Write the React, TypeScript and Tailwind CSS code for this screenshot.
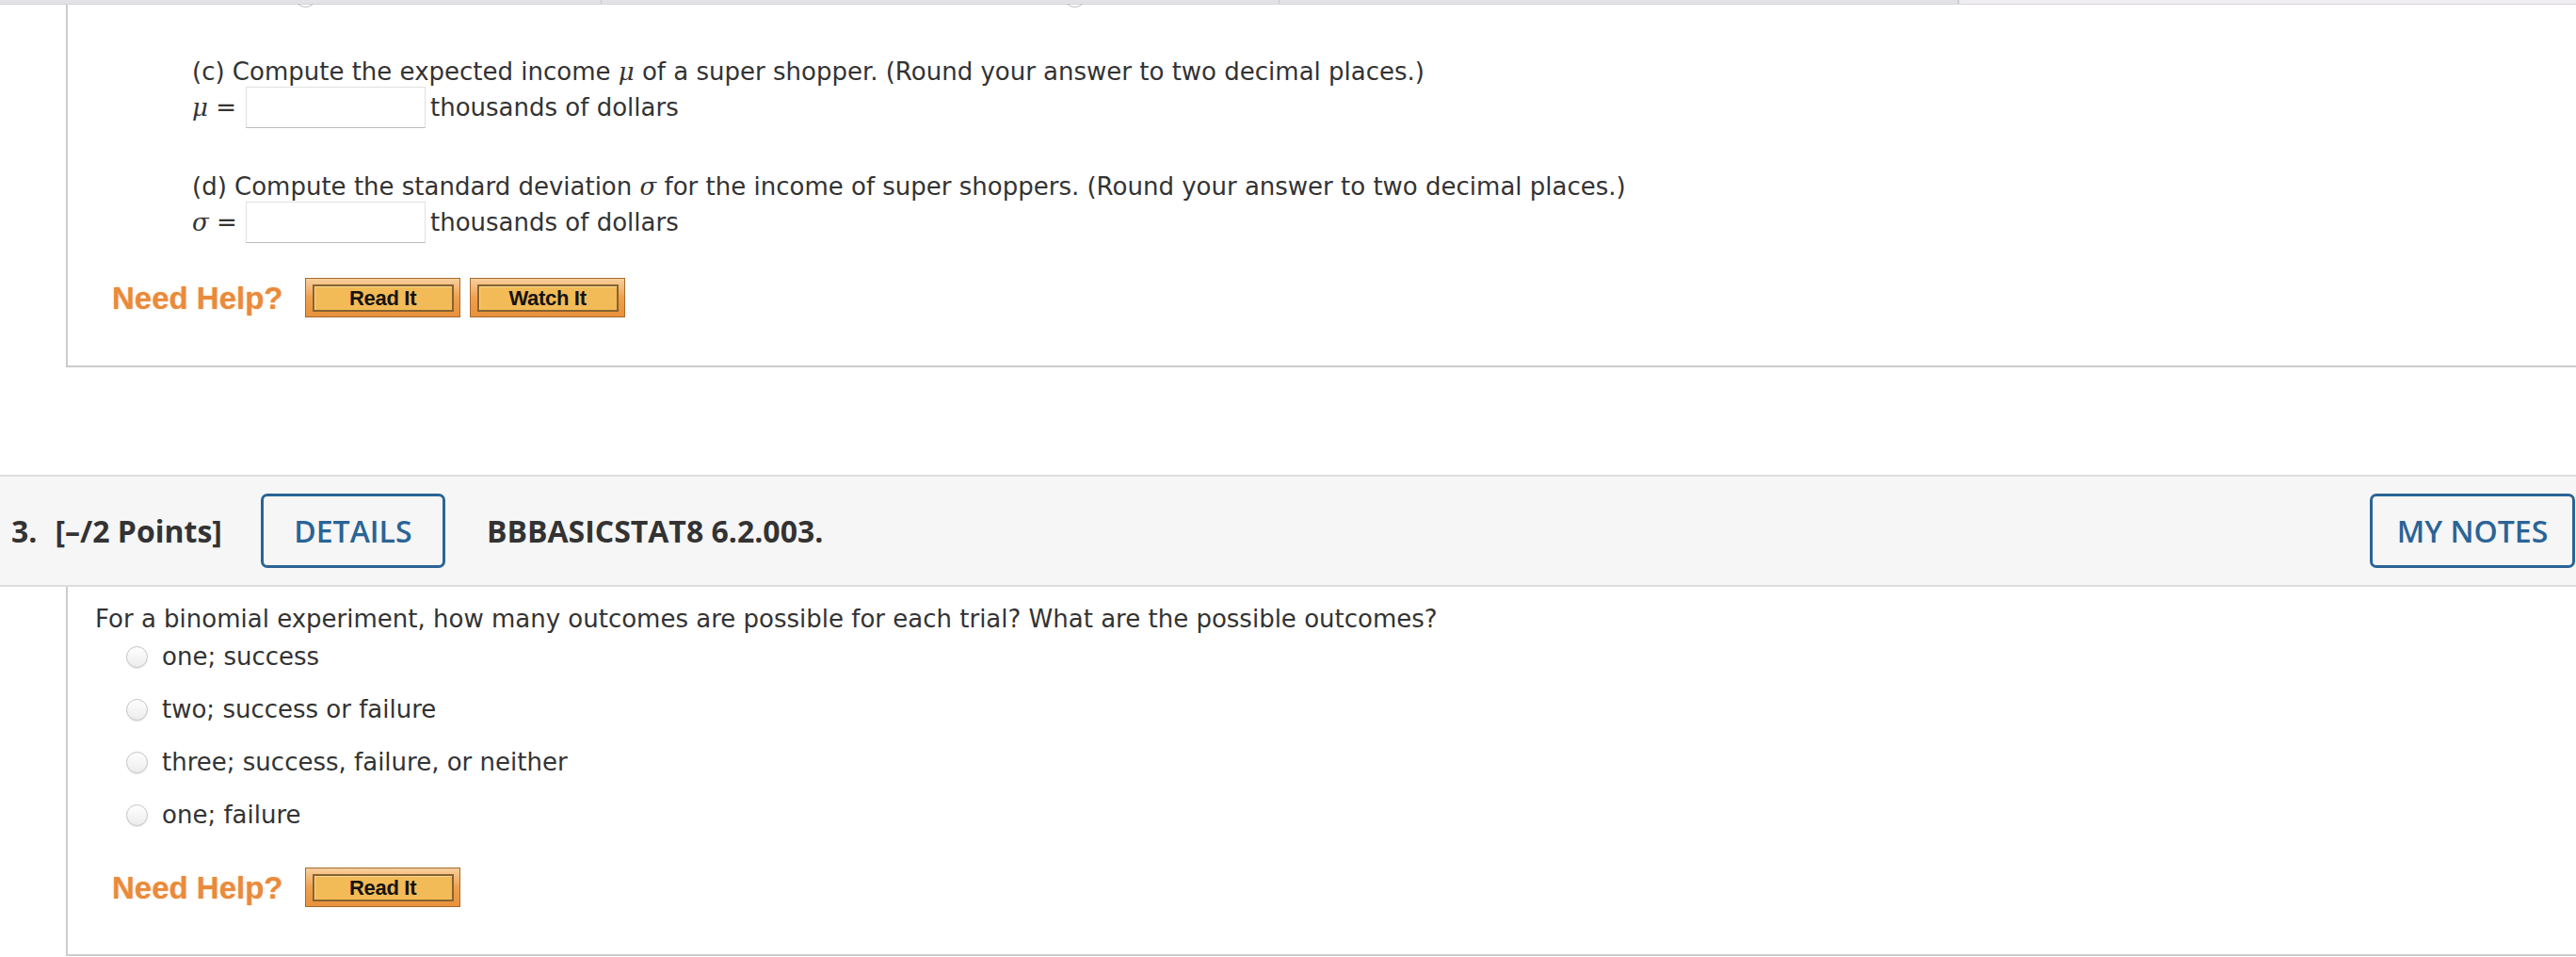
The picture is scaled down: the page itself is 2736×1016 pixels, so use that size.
import React from "react";

const body = "font-['DejaVu_Sans','Verdana',sans-serif]";

function TopStrip() {
  return (
    <div className="relative flex h-[5px] border-b border-[#d6d5d9]">
      <div className="w-[639px] border-r border-[#c9c8cc] bg-[#e3e2e6]" />
      <div className="w-[720px] border-r border-[#c9c8cc] bg-[#e3e2e6]" />
      <div className="w-[722px] border-r-2 border-[#cfcdd1] bg-[#e3e2e6]" />
      <div className="flex-1 bg-[#efedf1]" />
      {/* bottoms of clipped radio buttons peeking under the strip */}
      <svg className="absolute left-[315px] top-[4px]" width="19" height="5" viewBox="0 0 19 5">
        <path d="M1 0 Q9.5 7 18 0" fill="none" stroke="#bdbcc0" strokeWidth="1" />
      </svg>
      <svg className="absolute left-[1132px] top-[4px]" width="19" height="5" viewBox="0 0 19 5">
        <path d="M1 0 Q9.5 7 18 0" fill="none" stroke="#bdbcc0" strokeWidth="1" />
      </svg>
    </div>
  );
}

function HelpButton({ label, className = "" }: { label: string; className?: string }) {
  return (
    <button
      className={`h-[42px] w-[165px] border border-[#a66b2e] bg-linear-to-b from-[#f7cf9c] via-[#efa04c] to-[#e8913c] pb-[5px] pl-[7px] pr-[6px] pt-[6px] ${className}`}
    >
      <span className="flex h-full w-full items-center justify-center border-2 border-[#866330] bg-[#f2bb57] shadow-[inset_1px_1px_0_#f9d88f] font-['Liberation_Sans',Arial,sans-serif] text-[22px] font-bold leading-none tracking-[-0.3px] text-[#161310]">
        {label}
      </span>
    </button>
  );
}

function NeedHelp({ watch }: { watch?: boolean }) {
  return (
    <div className="flex h-[42px] items-center">
      <span className="font-['Liberation_Sans',Arial,sans-serif] text-[33px] font-bold leading-none text-[#e98a3c] [text-shadow:0_0_2px_#f5c896]">
        Need Help?
      </span>
      <HelpButton label="Read It" className="ml-[23px]" />
      {watch && <HelpButton label="Watch It" className="ml-[10px]" />}
    </div>
  );
}

function AnswerRow({ symbol }: { symbol: string }) {
  return (
    <div className="flex h-[44px] items-center">
      <span className="w-[57px] whitespace-nowrap">
        <i className="font-['DejaVu_Serif',serif]">{symbol}</i> =
      </span>
      <span className="h-[44px] w-[191px] border border-[#e0e0e0] border-b-[#bcbcbc] bg-white" />
      <span className="ml-[5px]">thousands of dollars</span>
    </div>
  );
}

function Radio() {
  return (
    <span className="h-[23px] w-[23px] rounded-full border border-[#c4c4c4] bg-linear-to-b from-white to-[#ececec] shadow-[0_1px_0_#e6e6e6]" />
  );
}

const options = [
  "one; success",
  "two; success or failure",
  "three; success, failure, or neither",
  "one; failure",
];

export default function App() {
  return (
    <div className={`h-[1016px] w-[2736px] overflow-hidden bg-white text-[26px] leading-[32px] text-[#333333] ${body}`}>
      <TopStrip />

      <section className="ml-[70px] border-b-2 border-l-2 border-[#cccccc] pb-[51px] pt-[55px]">
        <div className="pl-[132px]">
          <p className="h-[32px]">
            (c) Compute the expected income <i className="font-['DejaVu_Serif',serif]">μ</i> of a super shopper. (Round your answer to two decimal places.)
          </p>
          <AnswerRow symbol="μ" />
          <p className="mt-[46px] h-[32px]">
            (d) Compute the standard deviation <i className="font-['DejaVu_Serif',serif]">σ</i> for the income of super shoppers. (Round your answer to two decimal places.)
          </p>
          <AnswerRow symbol="σ" />
        </div>
        <div className="mt-[37px] pl-[47px]">
          <NeedHelp watch />
        </div>
      </section>

      <header className="mt-[114px] flex h-[119px] items-center border-y-2 border-[#dddddd] bg-[#f6f6f6] pl-[12px] font-['Open_Sans',sans-serif] text-[32px] leading-none text-[#333333]">
        <span className="font-bold">3.</span>
        <span className="ml-[19px] font-bold">[–/2 Points]</span>
        <button className="ml-[41px] h-[79px] w-[196px] rounded-[7px] border-[3px] border-[#2a6496] font-semibold text-[#2a6496]">
          DETAILS
        </button>
        <span className="ml-[44px] font-bold">BBBASICSTAT8 6.2.003.</span>
        <button className="ml-auto mr-[1px] h-[79px] w-[218px] rounded-[7px] border-[3px] border-[#2a6496] font-semibold text-[#2a6496]">
          MY NOTES
        </button>
      </header>

      <section className="ml-[70px] border-b-2 border-l-2 border-[#cccccc] pb-[50px] pt-[18px]">
        <p className="h-[32px] pl-[29px]">
          For a binomial experiment, how many outcomes are possible for each trial? What are the possible outcomes?
        </p>
        <ul className="mt-[8px] flex flex-col gap-[24px] pl-[62px]">
          {options.map((o) => (
            <li key={o} className="flex h-[32px] items-center">
              <Radio />
              <span className="ml-[15px]">{o}</span>
            </li>
          ))}
        </ul>
        <div className="mt-[40px] pl-[47px]">
          <NeedHelp />
        </div>
      </section>
    </div>
  );
}
